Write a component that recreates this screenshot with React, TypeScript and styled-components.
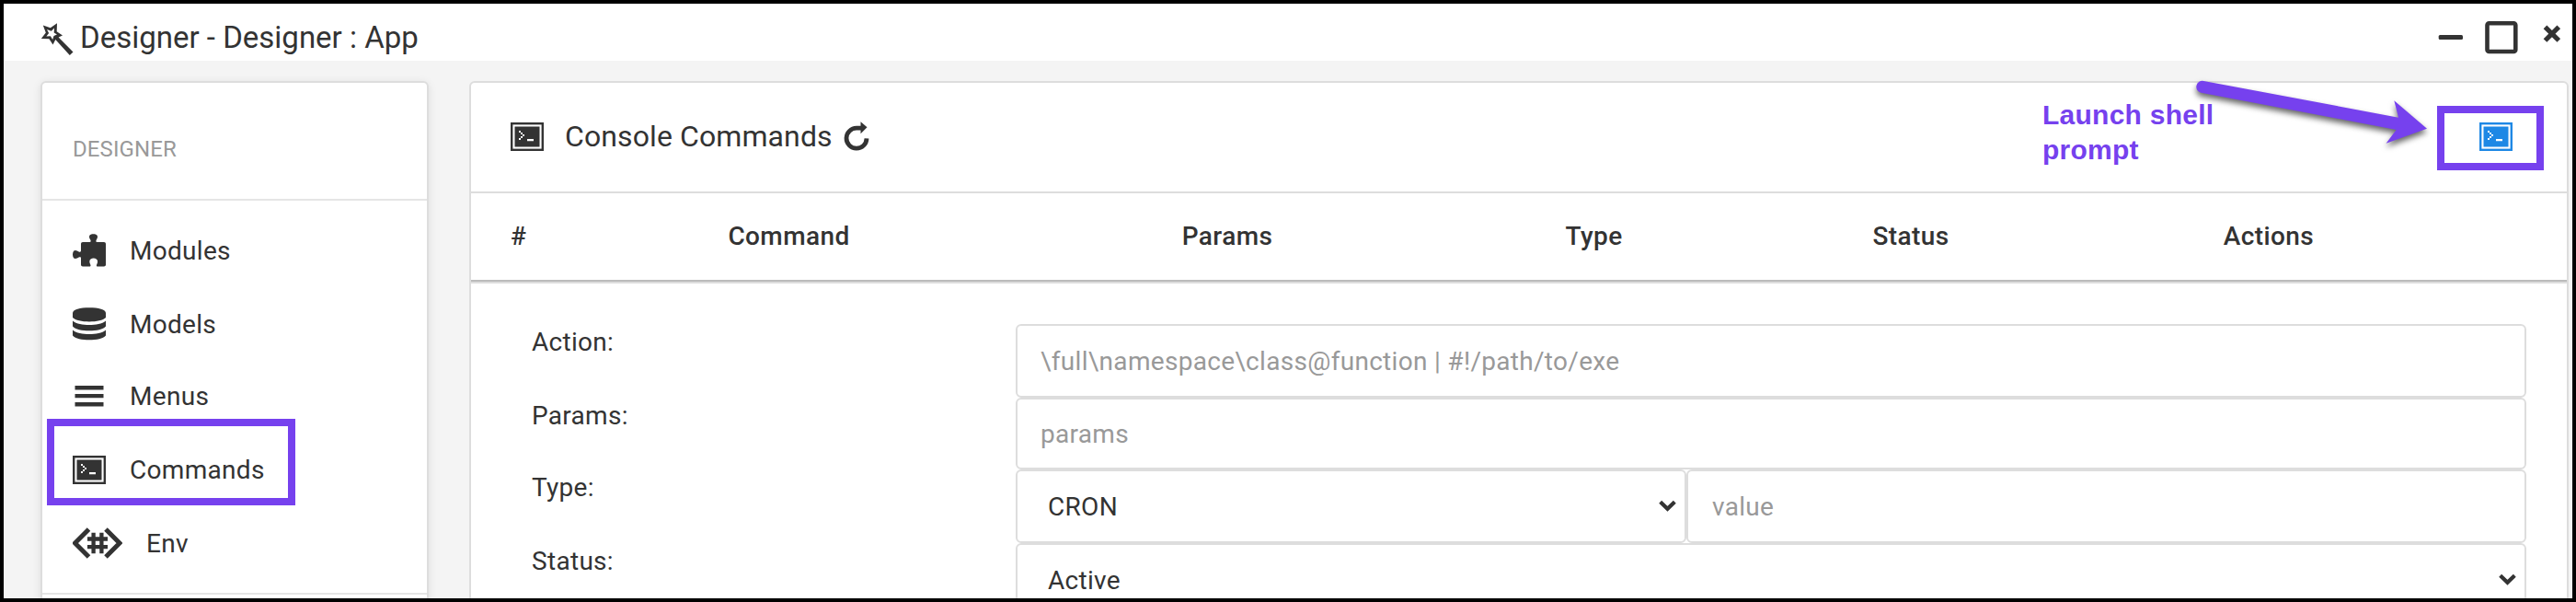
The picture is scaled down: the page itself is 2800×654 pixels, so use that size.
import React from "react";
import styled, { createGlobalStyle } from "styled-components";

const ink = "#333333";
const line = "#dddddd";
const accent = "#7641ee";

const GlobalStyle = createGlobalStyle`
  *, *::before, *::after { box-sizing: border-box; }
  body {
    margin: 0;
    font-family: Roboto, "Liberation Sans", sans-serif;
    font-size: 28px;
    letter-spacing: 0.3px;
    color: ${ink};
    background: #000;
  }
`;

const Window = styled.div`
  position: relative;
  display: flex;
  flex-direction: column;
  width: 2800px;
  height: 654px;
  border: 4px solid #000;
  background: #f4f4f4;
  overflow: hidden;
`;

const TitleBar = styled.header`
  display: flex;
  flex: none;
  align-items: flex-start;
  justify-content: space-between;
  height: 62px;
  padding: 0 13px 0 40px;
  background: #fff;
`;

const Title = styled.h1`
  display: flex;
  align-items: center;
  gap: 5px;
  margin: 0;
  font-size: 33px;
  font-weight: 400;
  letter-spacing: 0;
  line-height: 74px;
  white-space: nowrap;
  svg { margin-top: 3px; }
`;

const WindowControls = styled.div`
  display: flex;
  align-items: flex-start;
  svg { display: block; }
`;

const Body = styled.div`
  display: flex;
  flex: none;
  align-items: flex-start;
  gap: 44px;
  padding: 22px 4px 0 40px;
`;

const Card = styled.section<{ $width: number; $shadow?: boolean }>`
  flex: none;
  width: ${(p) => p.$width}px;
  border: 2px solid ${line};
  border-radius: 6px;
  background: #fff;
  ${(p) => p.$shadow && "box-shadow: 0 2px 10px rgba(0, 0, 0, 0.1);"}
`;

const SideHeading = styled.h2`
  height: 128px;
  margin: 0;
  padding: 52px 0 0 33px;
  border-bottom: 2px solid #e5e5e5;
  font-size: 24px;
  font-weight: 400;
  letter-spacing: 0.1px;
  line-height: 40px;
  color: #999;
`;

const Nav = styled.nav`
  padding: 15px 0;
  border-bottom: 2px solid #e5e5e5;
`;

const NavItem = styled.a<{ $gap?: number }>`
  display: flex;
  align-items: center;
  gap: 26px;
  height: 78px;
  margin-top: ${(p) => p.$gap ?? 2}px;
  padding-left: 33px;
`;

const NavRest = styled.div`
  height: 60px;
`;

const PanelHeader = styled.div`
  display: flex;
  align-items: center;
  height: 120px;
  padding: 0 59px 2px 43px;
  border-bottom: 2px solid ${line};
`;

const PanelTitle = styled.h2`
  flex: 1;
  margin: 0 0 0 23px;
  display: flex;
  align-items: center;
  gap: 12px;
  font-size: 32px;
  font-weight: 400;
  letter-spacing: 0.1px;
  line-height: 40px;
`;

const TableHead = styled.div`
  display: grid;
  grid-template-columns: 103px 485px 468px 329px 360px 418px;
  align-items: center;
  height: 98px;
  padding-bottom: 4px;
  border-bottom: 2px solid ${line};
  box-shadow: inset 0 -2px 0 #bbb;
  font-weight: 500;
  letter-spacing: 0.4px;
  text-align: center;
`;

const IndexCell = styled.div`
  padding-left: 43px;
  text-align: left;
`;

const HeadCell = styled.div``;

const Form = styled.form`
  padding: 44px 44px 0 66px;
`;

const FormRow = styled.div<{ $height?: number }>`
  display: grid;
  grid-template-columns: 526px 1fr;
  height: ${(p) => p.$height ?? 80}px;
`;

const Label = styled.label`
  line-height: 40px;
`;

const Controls = styled.div`
  display: flex;
  min-width: 0;
`;

const Input = styled.input<{ $indent?: number }>`
  flex: 1;
  min-width: 0;
  height: 100%;
  padding: 0 26px 0 ${(p) => p.$indent ?? 25}px;
  border: 2px solid ${line};
  border-radius: 6px;
  background: #fff;
  font: inherit;
  letter-spacing: inherit;
  color: ${ink};
  &::placeholder { color: #999; opacity: 1; }
`;

const Select = styled.div<{ $width?: number }>`
  display: flex;
  flex: ${(p) => (p.$width ? `0 0 ${p.$width}px` : "1")};
  align-items: center;
  justify-content: space-between;
  height: 100%;
  padding: 0 9px 0 33px;
  border: 2px solid ${line};
  border-radius: 6px;
  background: #fff;
`;

const HighlightBox = styled.div<{ $x: number; $y: number; $w: number; $h: number }>`
  position: absolute;
  left: ${(p) => p.$x}px;
  top: ${(p) => p.$y}px;
  width: ${(p) => p.$w}px;
  height: ${(p) => p.$h}px;
  border: 8px solid ${accent};
`;

const Note = styled.p`
  position: absolute;
  left: 2216px;
  top: 102px;
  width: 220px;
  margin: 0;
  font-family: "Liberation Sans", Arial, sans-serif;
  font-size: 30px;
  font-weight: 700;
  letter-spacing: 0.25px;
  line-height: 38px;
  color: ${accent};
`;

const Arrow = styled.svg`
  position: absolute;
  left: 2376px;
  top: 76px;
  filter: drop-shadow(0 4px 3px rgba(0, 0, 0, 0.6));
`;

const WandIcon = () => (
  <svg width="38" height="38" viewBox="44 24 38 38">
    <path fill={ink} fillRule="evenodd" d="M62 25.3 61.7 34.3 68 38.6 63.6 40.4 79.5 56.4 75.8 60 60.3 43 57.5 48.6 53.4 42.3 44.8 42 49.8 35.4 46.8 27.6 54.8 30.3ZM59 30.6 55.8 33.7 51 32 53.1 36 50.4 39.5 54.9 39.2 57.2 43 58.5 39 62 37.6 58.7 35.4Z" />
  </svg>
);

const PuzzleIcon = () => (
  <svg width="36" height="36" viewBox="0 0 36 36" fill={ink}>
    <path d="M11 9h7.7c1 0 1.200-1 .7-2.200C18.600 5.500 18 4.300 18 3c0-2 2-2.800 4.500-2.800S27 1 27 3c0 1.300-.6 2.500-1.300 3.800C25.200 8 25.300 9 26.300 9H34c1.200 0 2 .8 2 2v22.500c0 1.200-.8 2-2 2h-6.500c-1.600 0-2-.9-1.300-2.300.5-1 .9-2 .9-3.200 0-2.300-2-3.600-4.400-3.600S18.300 27.700 18.300 30c0 1.200.4 2.200.9 3.200.7 1.400.3 2.300-1.300 2.300H11c-1.200 0-2-.8-2-2v-7.200c0-1-1-1.300-2.300-.8C5.500 26.200 4.300 27 3 27 1 27 0 25 0 22.500S1 18 3 18c1.300 0 2.500.8 3.700 1.400C8 19.900 9 19.600 9 18.600V11c0-1.200.8-2 2-2Z" />
  </svg>
);

const DatabaseIcon = () => (
  <svg width="36" height="36" viewBox="79 335 36 36" fill={ink}>
    <path d="M79 341C79 337 87 335.200 97 335.200S115 337 115 341V346C112 349 105 350.400 97 350.400S82 349 79 346Z" />
    <path d="M79 349.500C83 353 90 354 97 354S111 353 115 349.500V355.500C112 359 105 360.300 97 360.300S82 359 79 355.500Z" />
    <path d="M79 359.500C83 363 90 364 97 364S111 363 115 359.500V365.500C112 369 105 370.300 97 370.300S82 369 79 365.500Z" />
  </svg>
);

const MenuIcon = () => (
  <svg width="36" height="36" viewBox="0 0 36 36" fill={ink}>
    <path d="M2.500 7h31v4.500h-31zM2.500 16h31v4.300h-31zM2.500 25h31v4.500h-31z" />
  </svg>
);

const ConsoleIcon = ({ color = ink }: { color?: string }) => (
  <svg width="36" height="31" viewBox="0 0 36 31">
    <rect x="1.200" y="1.200" width="33.600" height="28.600" fill="#fff" stroke={color} strokeWidth="2.400" />
    <rect x="4.500" y="4.500" width="27" height="22" fill={color} />
    <path d="M9 9h2v2h2v2h2v2h-2v2h-2v2H9v-2h2v-2h2v-2h-2v-2H9zM18 18h7v2.200h-7z" fill="#fff" />
  </svg>
);

const EnvIcon = () => (
  <svg width="54" height="34" viewBox="79 573.500 54 34" fill="none" stroke={ink}>
    <path strokeWidth="5" d="M96.500 575.500 81.500 590.500 96.500 605.500M115 575.500 130 590.500 115 605.500" />
    <path strokeWidth="4.300" d="M101.600 579.300V601.700M110.400 579.300V601.700M95 586H117M95 594.700H117" />
  </svg>
);

const RefreshIcon = () => (
  <svg width="28" height="32" viewBox="915.500 133.500 28 32">
    <path d="M940.700 151A11 11 0 1 1 929.800 139.800H936" transform="translate(-.2 .9)" fill="none" stroke={ink} strokeWidth="4.800" />
    <path d="M934 133.800 941 139.800 934 146.800Z" fill={ink} />
  </svg>
);

const ChevronIcon = () => (
  <svg width="19" height="14" viewBox="0 0 19 14" fill="none" stroke={ink} strokeWidth="4.200">
    <path d="M1.700 2.200 9.500 9.800 17.300 2.200" />
  </svg>
);

const navItems = [
  { label: "Modules", icon: <PuzzleIcon />, gap: 0 },
  { label: "Models", icon: <DatabaseIcon />, gap: 2 },
  { label: "Menus", icon: <MenuIcon />, gap: 0 },
  { label: "Commands", icon: <ConsoleIcon />, gap: 2 },
  { label: "Env", icon: <EnvIcon />, gap: 2 },
];

const columns = ["Command", "Params", "Type", "Status", "Actions"];

export default function App() {
  return (
    <>
      <GlobalStyle />
      <Window>
        <TitleBar>
          <Title>
            <WandIcon />
            Designer - Designer : App
          </Title>
          <WindowControls>
            <svg width="136" height="60" viewBox="2647 4 136 60" fill="none" stroke={ink}>
              <rect x="2650.700" y="38" width="26.300" height="5" rx="1.500" fill={ink} stroke="none" />
              <rect x="2703.500" y="25.200" width="30.800" height="30.800" rx="2" strokeWidth="4.600" />
              <path strokeWidth="5.200" d="M2766.500 29.300 2781.300 44M2781.300 29.300 2766.500 44" />
            </svg>
          </WindowControls>
        </TitleBar>

        <Body>
          <Card $width={422} $shadow>
            <SideHeading>DESIGNER</SideHeading>
            <Nav>
              {navItems.map((item) => (
                <NavItem key={item.label} $gap={item.gap}>
                  {item.icon}
                  {item.label}
                </NavItem>
              ))}
            </Nav>
            <NavRest />
          </Card>

          <Card $width={2282}>
            <PanelHeader>
              <ConsoleIcon />
              <PanelTitle>
                Console Commands
                <RefreshIcon />
              </PanelTitle>
              <ConsoleIcon color="#1e88e5" />
            </PanelHeader>
            <TableHead>
              <IndexCell>#</IndexCell>
              {columns.map((c) => (
                <HeadCell key={c}>{c}</HeadCell>
              ))}
            </TableHead>
            <Form>
              <FormRow>
                <Label>Action:</Label>
                <Controls>
                  <Input placeholder="\full\namespace\class@function | #!/path/to/exe" />
                </Controls>
              </FormRow>
              <FormRow $height={78}>
                <Label>Params:</Label>
                <Controls>
                  <Input placeholder="params" />
                </Controls>
              </FormRow>
              <FormRow>
                <Label>Type:</Label>
                <Controls>
                  <Select $width={729}>
                    CRON
                    <ChevronIcon />
                  </Select>
                  <Input $indent={26} placeholder="value" />
                </Controls>
              </FormRow>
              <FormRow>
                <Label>Status:</Label>
                <Controls>
                  <Select>
                    Active
                    <ChevronIcon />
                  </Select>
                </Controls>
              </FormRow>
            </Form>
          </Card>
        </Body>

        <HighlightBox $x={47} $y={451} $w={270} $h={94} />
        <HighlightBox $x={2645} $y={111} $w={116} $h={70} />
        <Note>Launch shell prompt</Note>
        <Arrow width="270" height="90" viewBox="2380 80 270 90" fill={accent}>
          <path d="M2395.300 87.900 2607 127.700 2602.300 109.300 2638 139.700 2593.600 155.700 2604.700 141 2392.500 100.800A6.600 6.600 0 0 1 2395.300 87.900Z" />
        </Arrow>
      </Window>
    </>
  );
}
